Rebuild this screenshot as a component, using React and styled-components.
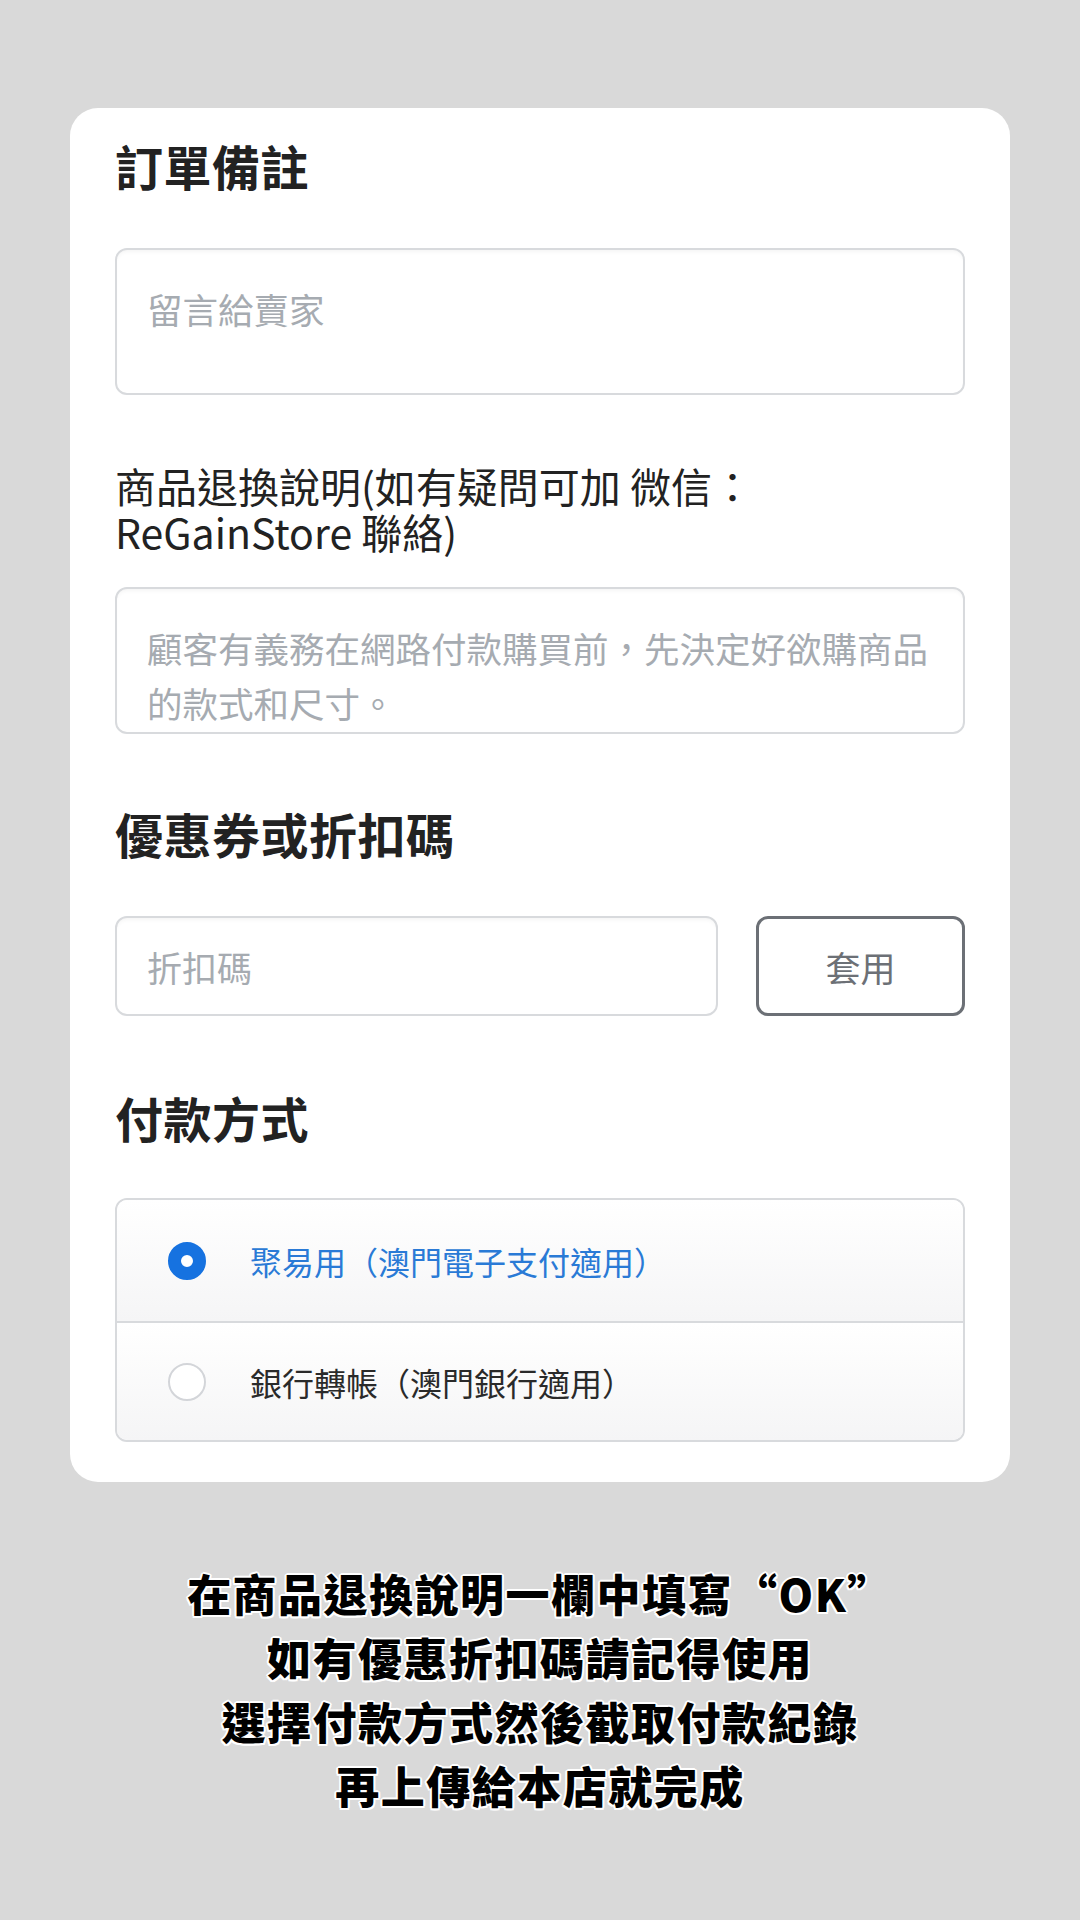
import React from "react";
import styled, { createGlobalStyle } from "styled-components";

const Global = createGlobalStyle`
  html, body { margin: 0; padding: 0; background: #d9d9d9; }
  body { font-family: "Noto Sans CJK TC", "Noto Sans", "Liberation Sans", sans-serif; }
  * { box-sizing: border-box; }
`;

const Page = styled.div`
  width: 1080px;
  min-height: 1920px;
  background: #d9d9d9;
  padding: 108px 70px 0;
`;

const Card = styled.div`
  background: #fff;
  border-radius: 28px;
  padding: 28px 45px 40px;
  display: flex;
  flex-direction: column;
`;

const Section = styled.section`
  display: flex;
  flex-direction: column;
  margin-top: ${(p) => p.$top || 0}px;
`;

const Heading = styled.h2`
  margin: 0 0 ${(p) => p.$gap || 54}px;
  font-size: 48px;
  line-height: 58px;
  font-weight: 700;
  color: #222;
  letter-spacing: 0.5px;
`;

const Label = styled.div`
  font-size: 41px;
  line-height: 46px;
  color: #222;
  margin-bottom: 33px;
  font-weight: 400;
`;

const TextArea = styled.div`
  height: 147px;
  border: 2px solid #d8dadd;
  border-radius: 12px;
  box-shadow: inset 0 4px 5px -3px rgba(0, 0, 0, 0.06);
  padding: 31px 30px 0;
  font-size: 35.5px;
  line-height: 55px;
  color: #a6abb1;
`;

const CouponRow = styled.div`
  display: flex;
  gap: 38px;
  height: 100px;
`;

const Input = styled.div`
  flex: 1;
  border: 2px solid #d8dadd;
  border-radius: 12px;
  box-shadow: inset 0 4px 5px -3px rgba(0, 0, 0, 0.06);
  padding: 0 30px;
  display: flex;
  align-items: center;
  font-size: 35px;
  color: #a6abb1;
`;

const ApplyButton = styled.div`
  width: 209px;
  border: 3px solid #6c7076;
  border-radius: 12px;
  display: flex;
  align-items: center;
  justify-content: center;
  font-size: 35px;
  color: #6c7076;
`;

const PayBox = styled.div`
  border: 2px solid #d8dadd;
  border-radius: 12px;
  overflow: hidden;
  display: flex;
  flex-direction: column;
`;

const PayRow = styled.div`
  height: ${(p) => (p.$last ? 119 : 121)}px;
  display: flex;
  align-items: center;
  padding-left: 51px;
  gap: 44px;
  background: linear-gradient(#ffffff, #f5f5f6);
  border-top: ${(p) => (p.$last ? "2px solid #d8dadd" : "none")};
`;

const Radio = styled.span`
  width: 38px;
  height: 38px;
  border-radius: 50%;
  flex: none;
  background: #fff;
  border: ${(p) => (p.$on ? "13px solid #1672e0" : "2px solid #d3d5d9")};
`;

const PayText = styled.span`
  font-size: 32px;
  color: ${(p) => (p.$on ? "#2a7ad6" : "#2a2a2a")};
`;

const Note = styled.div`
  margin-top: 79px;
  text-align: center;
  font-size: 44px;
  line-height: 64px;
  font-weight: 900;
  letter-spacing: 1.5px;
  color: #000;
  text-shadow:
    2px 0 0 #fff, -2px 0 0 #fff, 0 2px 0 #fff, 0 -2px 0 #fff,
    1.5px 1.5px 0 #fff, -1.5px 1.5px 0 #fff, 1.5px -1.5px 0 #fff, -1.5px -1.5px 0 #fff;
`;

export default function App() {
  return (
    <>
      <Global />
      <Page>
        <Card>
          <Section>
            <Heading>訂單備註</Heading>
            <TextArea>留言給賣家</TextArea>
          </Section>
          <Section $top={67}>
            <Label>商品退換說明(如有疑問可加 微信：ReGainStore 聯絡)</Label>
            <TextArea>顧客有義務在網路付款購買前，先決定好欲購商品的款式和尺寸。</TextArea>
          </Section>
          <Section $top={70}>
            <Heading>優惠券或折扣碼</Heading>
            <CouponRow>
              <Input>折扣碼</Input>
              <ApplyButton>套用</ApplyButton>
            </CouponRow>
          </Section>
          <Section $top={72}>
            <Heading $gap={52}>付款方式</Heading>
            <PayBox>
              <PayRow>
                <Radio $on />
                <PayText $on>聚易用（澳門電子支付適用）</PayText>
              </PayRow>
              <PayRow $last>
                <Radio />
                <PayText>銀行轉帳（澳門銀行適用）</PayText>
              </PayRow>
            </PayBox>
          </Section>
        </Card>
        <Note>
          在商品退換說明一欄中填寫“OK”
          <br />
          如有優惠折扣碼請記得使用
          <br />
          選擇付款方式然後截取付款紀錄
          <br />
          再上傳給本店就完成
        </Note>
      </Page>
    </>
  );
}
